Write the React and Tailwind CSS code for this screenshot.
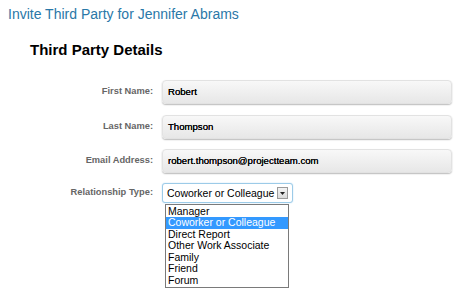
import React from 'react';

const fields = [
  { label: 'First Name:', value: 'Robert' },
  { label: 'Last Name:', value: 'Thompson' },
  { label: 'Email Address:', value: 'robert.thompson@projectteam.com' },
];

const options = ['Manager', 'Coworker or Colleague', 'Direct Report', 'Other Work Associate', 'Family', 'Friend', 'Forum'];

export default function App() {
  return (
    <div className="w-[472px] h-[296px] bg-white overflow-hidden pt-[6px] pl-[8px]" style={{ fontFamily: '"Liberation Sans", Arial, sans-serif' }}>
      <h1 className="text-[14px] leading-[16px] text-[#2a78a8]">Invite Third Party for Jennifer Abrams</h1>

      <h2 className="mt-[19px] ml-[22px] text-[15px] leading-[18px] font-bold text-black">Third Party Details</h2>

      <div className="mt-[21px] -ml-[8px] flex flex-col gap-[10px]">
        {fields.map((f, i) => (
          <div key={f.label} className={`flex items-center gap-[9px] ${i === 1 ? 'mt-[1px]' : ''}`}>
            <label className="w-[153px] text-right text-[9.3px] font-bold text-[#666]">{f.label}</label>
            <div className="w-[290px] h-[24px] flex items-center pl-[5px] rounded-[4px] border border-[#e2e2e2] bg-gradient-to-b from-[#f8f8f8] to-[#e7e7e7] shadow-[0_1px_1.5px_rgba(0,0,0,0.28)] text-[9.6px] text-black [text-shadow:0_0_0.15px_#000]">
              {f.value}
            </div>
          </div>
        ))}

        <div className="flex items-center gap-[9px]">
          <label className="w-[153px] text-right text-[9.3px] font-bold text-[#666]">Relationship Type:</label>
          <div className="relative w-[131px] h-[20px] rounded-[3px] border border-[#9ccbe8] shadow-[0_0_1.5px_#b9dcf2] flex items-center pl-[4px] pr-[4px] bg-white">
            <span className="text-[10.5px] text-black leading-none">Coworker or Colleague</span>
            <div className="ml-auto w-[11px] h-[12px] border border-[#9a9a9a] bg-gradient-to-b from-[#f4f4f4] to-[#dadada] flex items-center justify-center">
              <svg width="5" height="3" viewBox="0 0 5 3"><path d="M0 0h5L2.5 3z" fill="#222" /></svg>
            </div>

            <ul className="absolute left-[2px] top-[20px] w-[124px] border border-[#7a7a7a] bg-white py-[0.5px] z-10">
              {options.map((o) => (
                <li
                  key={o}
                  className={`h-[11.6px] leading-[11.6px] text-[10.5px] pl-[2px] ${o === 'Coworker or Colleague' ? 'bg-[#3399ff] text-white' : 'text-black'}`}
                >
                  {o}
                </li>
              ))}
            </ul>
          </div>
        </div>
      </div>
    </div>
  );
}
